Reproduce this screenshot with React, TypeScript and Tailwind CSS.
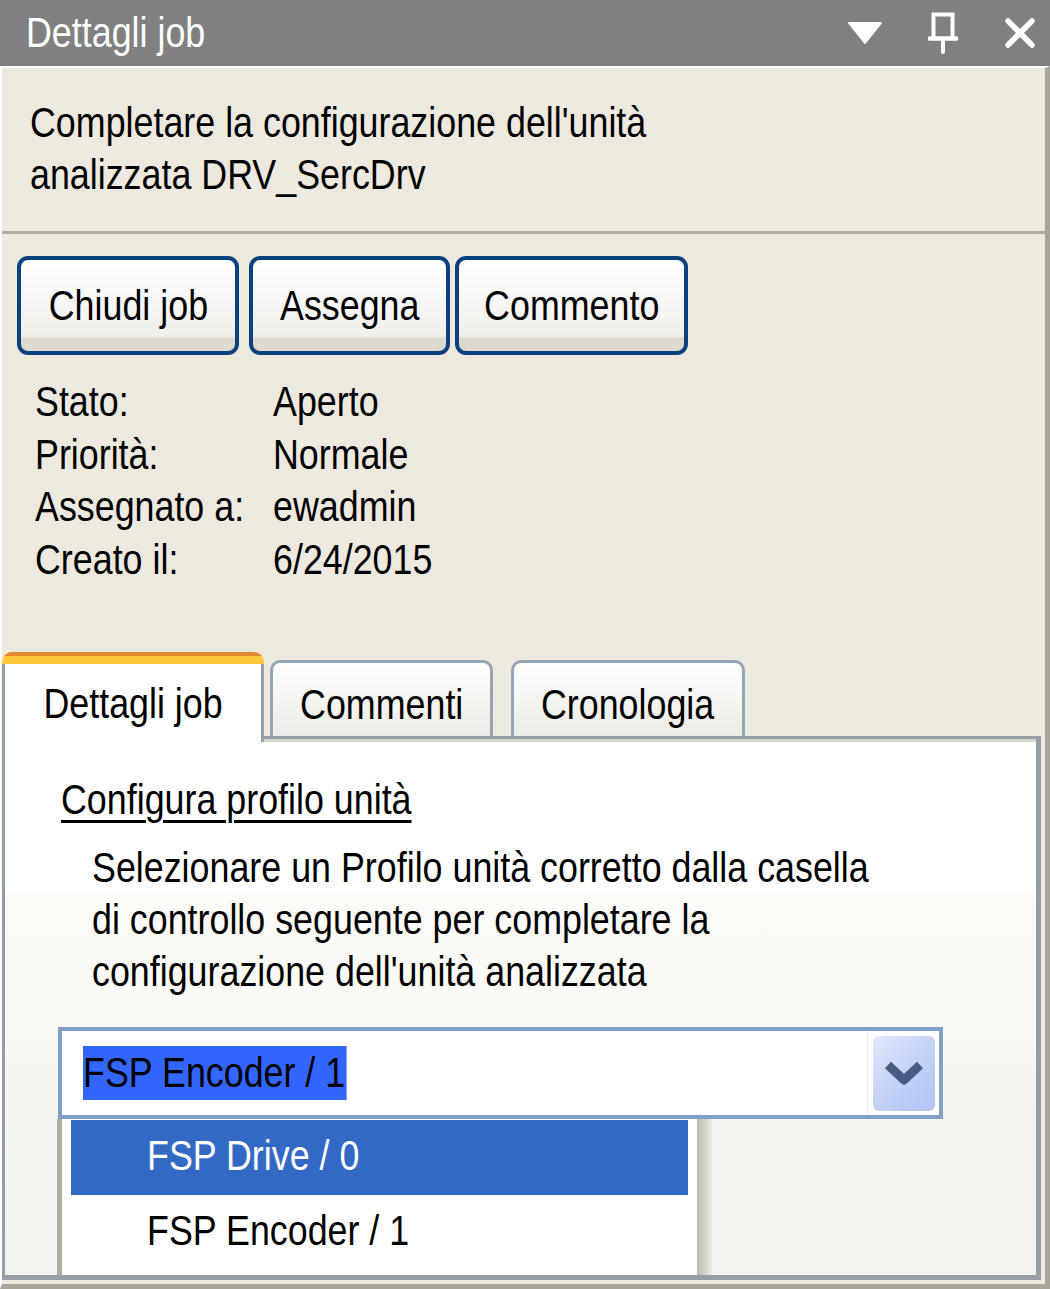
import React from 'react';

const rows = [
  { label: 'Stato:', value: 'Aperto' },
  { label: 'Priorità:', value: 'Normale' },
  { label: 'Assegnato a:', value: 'ewadmin' },
  { label: 'Creato il:', value: '6/24/2015' },
];

// Narrow text: Arial Narrow look from Liberation Sans
function N({ children, center, className }: { children: React.ReactNode; center?: boolean; className?: string }) {
  return (
    <span className={`inline-block whitespace-nowrap scale-x-[0.853] ${center ? 'origin-center' : 'origin-left'} ${className ?? ''}`}>
      {children}
    </span>
  );
}

function ActionButton({ label, width, className }: { label: string; width: string; className?: string }) {
  return (
    <button
      className={`${width} ${className ?? ''} h-[99px] rounded-[11px] border-[4px] border-[#0b417f] bg-[linear-gradient(to_bottom,#ffffff_0%,#f5f4f1_60%,#efeee9_84%,#ddd9cf_86%,#ddd9cf_100%)] text-[42px] leading-none text-black`}
    >
      <N center>{label}</N>
    </button>
  );
}

export default function App() {
  return (
    <div className="w-[1050px] h-[1289px] overflow-hidden flex flex-col bg-[#ede9de] font-['Liberation_Sans','Arial',sans-serif] text-black">
      {/* Title bar */}
      <div className="h-[66px] shrink-0 bg-[#808080] flex items-center pl-[26px] pr-[15px]">
        <span className="text-[42px] leading-none text-white">
          <N>Dettagli job</N>
        </span>
        <div className="ml-auto flex items-center">
          <svg width="34" height="22" viewBox="0 0 34 22">
            <path d="M1 1 H33 L17 21 Z" fill="white" stroke="white" strokeWidth="2" strokeLinejoin="round" />
          </svg>
          <svg width="30" height="42" viewBox="0 0 30 42" className="ml-[46px]" fill="none" stroke="white" strokeLinecap="round">
            <path d="M5.5 26 V2.5 H24.5 V26" strokeWidth="4" />
            <path d="M1.5 26.5 H28.5" strokeWidth="4.5" />
            <path d="M15 27 V40" strokeWidth="4" />
          </svg>
          <svg width="30" height="30" viewBox="0 0 30 30" className="ml-[47px]" stroke="white" strokeWidth="5.5" strokeLinecap="round">
            <path d="M3 3 L27 27 M27 3 L3 27" />
          </svg>
        </div>
      </div>

      {/* Body */}
      <div className="flex-1 flex flex-col border-t-2 border-l-2 border-t-white border-l-white border-r-[5px] border-r-[#a9a597] border-b-[5px] border-b-[#a9a597]">
        <div className="pl-[28px] pt-[29px] pb-[30px] text-[42px] leading-[52px]">
          <div><N>Completare la configurazione dell'unità</N></div>
          <div><N>analizzata DRV_SercDrv</N></div>
        </div>
        <div className="h-[3px] bg-[#b3ae9f]" />

        <div className="mt-[22px] pl-[15px] flex">
          <ActionButton label="Chiudi job" width="w-[222px]" />
          <ActionButton label="Assegna" width="w-[201px]" className="ml-[10px]" />
          <ActionButton label="Commento" width="w-[233px]" className="ml-[5px]" />
        </div>

        <div className="mt-[21px] pl-[33px] grid grid-cols-[238px_1fr] text-[42px] leading-[52.5px]">
          {rows.map((r) => (
            <React.Fragment key={r.label}>
              <div className="whitespace-nowrap"><N>{r.label}</N></div>
              <div><N>{r.value}</N></div>
            </React.Fragment>
          ))}
        </div>

        {/* Tabs */}
        <div className="mt-[66px] h-[84px] shrink-0 flex items-end">
          <div className="relative z-10 w-[262px] h-[90px] -mb-[6px] flex flex-col rounded-t-[10px] overflow-hidden">
            <div className="h-[12px] border-t-[4px] border-[#e0892e] bg-[#ffc83a]" />
            <div className="flex-1 border-x-[3px] border-[#939ea6] bg-white text-center pt-[14px] text-[42px] leading-[52px]">
              <N center>Dettagli job</N>
            </div>
          </div>
          <div className="ml-[6px] w-[223px] h-[76px] rounded-t-[10px] border-[3px] border-b-0 border-[#93a6b8] bg-[linear-gradient(to_bottom,#ffffff,#ebeae4)] text-center pt-[16px] text-[42px] leading-[52px]">
            <N center>Commenti</N>
          </div>
          <div className="ml-[18px] w-[234px] h-[76px] rounded-t-[10px] border-[3px] border-b-0 border-[#93a6b8] bg-[linear-gradient(to_bottom,#ffffff,#ebeae4)] text-center pt-[16px] text-[42px] leading-[52px]">
            <N center>Cronologia</N>
          </div>
        </div>

        {/* Panel */}
        <div className="w-[1039px] flex-1 mb-[4px] overflow-hidden border-t-[3px] border-l-[3px] border-r-[5px] border-b-[5px] border-[#939ea6] bg-[linear-gradient(to_bottom,#ffffff_0%,#ffffff_27%,#fcfbf8_30%,#faf9f6_55%,#f5f5f2_62%,#f4f2ee_100%)] shadow-[inset_0_3px_0_#d8d6c8] pt-[35px]">
          <div className="pl-[56px] text-[42px] leading-[52px]">
            <N className="underline decoration-[3px] underline-offset-[6px]">Configura profilo unità</N>
          </div>
          <div className="mt-[16px] pl-[87px] text-[42px] leading-[52px]">
            <div><N>Selezionare un Profilo unità corretto dalla casella</N></div>
            <div><N>di controllo seguente per completare la</N></div>
            <div><N>configurazione dell'unità analizzata</N></div>
          </div>

          {/* Combo box */}
          <div className="relative mt-[29px] ml-[53px] w-[885px] h-[92px] border-[4px] border-[#7fa1c5] bg-white flex items-center">
            <span className="ml-[21px] text-[42px] leading-[54px]">
              <N className="bg-[#3366ff] pr-[2px]">FSP Encoder / 1</N>
            </span>
            <div className="ml-auto mr-[4px] h-[84px] pl-[5px] border-l border-[#eeeeee] flex items-center">
              <div className="w-[62px] h-[75px] rounded-[6px] bg-[linear-gradient(135deg,#e2e8fc_0%,#c4d2f7_50%,#b2c4f4_100%)] flex items-center justify-center">
                <svg width="40" height="28" viewBox="0 0 40 28" fill="none" stroke="#4a5b82" strokeWidth="9" strokeLinejoin="round">
                  <path d="M4 6 L20 21 L36 6" />
                </svg>
              </div>
            </div>

            {/* Dropdown list */}
            <div className="absolute left-[-5px] top-[88px] w-[655px] h-[160px] flex">
              <div className="w-[640px] border-l-[5px] border-[#b0ab9c] bg-white pt-[1px]">
                <div className="ml-[9px] w-[617px] h-[75px] bg-[#3269c5] text-white text-[42px] leading-[71px] pl-[76px]">
                  <N>FSP Drive / 0</N>
                </div>
                <div className="h-[75px] text-[42px] leading-[71px] pl-[85px]">
                  <N>FSP Encoder / 1</N>
                </div>
              </div>
              <div className="w-[15px] bg-[linear-gradient(to_right,#bfbbaf,#ebe9e3)]" />
            </div>
          </div>
        </div>
      </div>
    </div>
  );
}
